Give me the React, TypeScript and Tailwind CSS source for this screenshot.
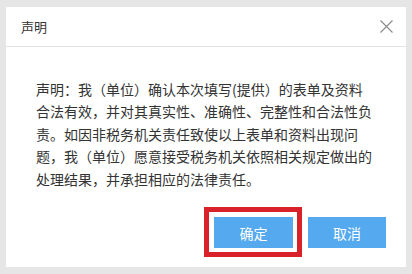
import React from "react";

export default function App() {
  return (
    <div
      className="w-[412px] h-[274px] bg-[#e6e6e6] pt-[7px] pl-[6px] overflow-hidden"
      style={{ fontFamily: '"Noto Sans CJK SC", "Noto Sans", sans-serif' }}
    >
      <div className="w-[400px] h-[260px] bg-white flex flex-col">
        <div className="h-[40px] border-b border-[#e3e3e3] flex items-center justify-between pl-[15px] pr-[12px]">
          <span className="text-[13px] text-[#333] leading-none">声明</span>
          <svg width="13" height="13" viewBox="0 0 13 13" className="mr-[1px]">
            <path d="M0.5 0.5 L12.5 12.5 M12.5 0.5 L0.5 12.5" stroke="#8a8a8a" strokeWidth="1.1" fill="none" />
          </svg>
        </div>
        <div className="pt-[31px] pl-[30px] w-[368px] text-[14px] leading-[22.4px] text-[#333] [text-spacing-trim:space-all]">
          声明：我（单位）确认本次填写(提供）的表单及资料合法有效，并对其真实性、准确性、完整性和合法性负责。如因非税务机关责任致使以上表单和资料出现问题，我（单位）愿意接受税务机关依照相关规定做出的处理结果，并承担相应的法律责任。
        </div>
        <div className="flex justify-end gap-[15px] pr-[20px] mt-[27px]">
          <div className="relative">
            <button className="w-[79px] h-[31px] bg-[#55a9ee] text-white text-[14px] leading-none">
              确定
            </button>
            <div className="absolute top-[-10px] left-[-10px] right-[-9px] bottom-[-9px] border-[5px] border-[#d92129] pointer-events-none" />
          </div>
          <button className="w-[78px] h-[31px] bg-[#55a9ee] text-white text-[14px] leading-none">
            取消
          </button>
        </div>
      </div>
    </div>
  );
}
